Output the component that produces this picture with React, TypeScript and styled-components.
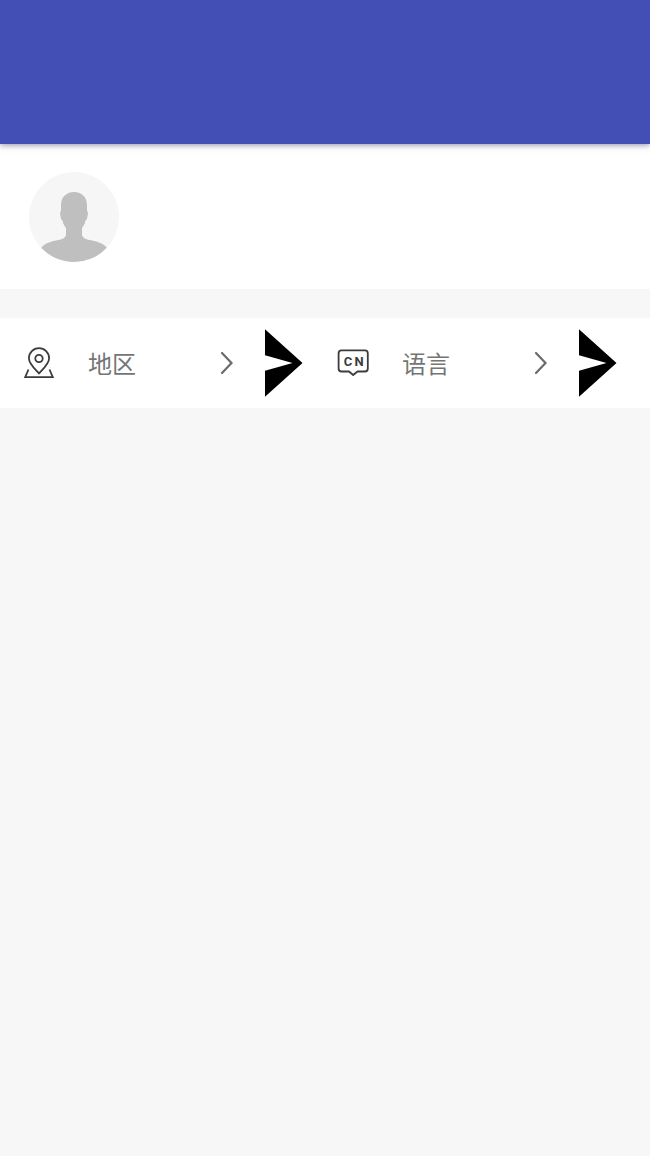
import React from "react";
import styled, { createGlobalStyle } from "styled-components";

const GlobalStyle = createGlobalStyle`
  * { box-sizing: border-box; }
  body {
    margin: 0;
    background: #f7f7f7;
    font-family: "Noto Sans CJK SC", sans-serif;
  }
`;

const Page = styled.div`
  display: flex;
  flex-direction: column;
  min-height: 100vh;
`;

const TopBar = styled.header`
  position: relative;
  height: 144px;
  background: #444fb5;
  box-shadow: 0 1px 6px rgba(30, 30, 80, 0.5);
`;

const Profile = styled.section`
  display: flex;
  align-items: center;
  height: 145px;
  padding: 0 29px;
  background: #fff;
`;

const Settings = styled.nav`
  display: flex;
  height: 90px;
  margin-top: 29px;
  padding-right: 22px;
  background: #fff;
`;

const Item = styled.button`
  display: flex;
  flex: 1;
  align-items: center;
  min-width: 0;
  padding: 0 11px 0 23px;
  border: 0;
  background: transparent;
  font: inherit;
  color: #757575;
  text-align: left;
  cursor: pointer;
`;

const Label = styled.span`
  flex: 1;
  margin-left: 33px;
  font-size: 24px;
  line-height: 36px;
`;

const ArrowSlot = styled.span`
  display: flex;
  margin-left: 31px;
`;

const Svg = styled.svg`
  display: block;
  flex: none;
`;

const Avatar = () => (
  <Svg width="90" height="90" viewBox="0 0 90 90" role="img" aria-label="头像">
    <clipPath id="avatar-circle">
      <circle cx="45" cy="45" r="45" />
    </clipPath>
    <g clipPath="url(#avatar-circle)">
      <rect width="90" height="90" fill="#f6f6f6" />
      <path
        d="M45 20C37 20 32 25.500 32 33V39C31 39 31 41 31.300 43C31.700 46 32.300 48.500 33.500 48.500C34 51.500 35.500 54 37 56V62C37 66 33 67.500 27 68.500C20 69.800 15 72 12 76V90H78V76C75 72 70 69.800 63 68.500C57 67.500 53 66 53 62V56C54.500 54 56 51.500 56.500 48.500C57.700 48.500 58.300 46 58.700 43C59 41 59 39 58 39V33C58 25.500 53 20 45 20Z"
        fill="#bfbfbf"
      />
    </g>
  </Svg>
);

const RegionIcon = () => (
  <Svg width="32" height="34" viewBox="0 0 32 34" fill="none" stroke="#3c3c3c" strokeWidth="1.800" aria-hidden="true">
    <path d="M16 27.500C12.500 23.500 5.900 18 5.900 12.300A10.100 10.100 0 0 1 26.100 12.300C26.100 18 19.500 23.500 16 27.500Z" strokeLinejoin="round" />
    <circle cx="16" cy="12.500" r="3.700" />
    <path d="M5.500 23.500L2.200 31.200H29.800L26.500 23.500" />
  </Svg>
);

const LanguageIcon = () => (
  <Svg width="32" height="34" viewBox="0 0 32 34" aria-hidden="true">
    <path
      d="M4.500 4.300H28Q30.800 4.300 30.800 7.300V22.500Q30.800 25.500 28 25.500H20.500L16.200 29L12 25.500H4.500Q1.600 25.500 1.600 22.500V7.300Q1.600 4.300 4.500 4.300Z"
      fill="none"
      stroke="#3c3c3c"
      strokeWidth="1.800"
      strokeLinejoin="round"
    />
    <g fill="#3c3c3c" fontFamily="Roboto, sans-serif" fontSize="13" fontWeight="700" textAnchor="middle">
      <text x="11" y="20">C</text>
      <text x="22" y="20">N</text>
    </g>
  </Svg>
);

const Chevron = () => (
  <Svg width="14" height="24" viewBox="0 0 14 24" fill="none" stroke="#6b6b6b" strokeWidth="2.200" aria-hidden="true">
    <path d="M2 2L11.500 12L2 22" strokeLinecap="round" />
  </Svg>
);

const Arrow = () => (
  <Svg width="38" height="68" viewBox="0 0 38 68" aria-hidden="true">
    <path d="M0 0.300L37.500 34L0 67.700V41.700L27.500 34L0 26.300Z" fill="#000" />
  </Svg>
);

const items = [
  { label: "地区", Icon: RegionIcon },
  { label: "语言", Icon: LanguageIcon },
];

export default function App() {
  return (
    <Page>
      <GlobalStyle />
      <TopBar />
      <main>
        <Profile>
          <Avatar />
        </Profile>
        <Settings>
          {items.map(({ label, Icon }) => (
            <Item key={label} type="button">
              <Icon />
              <Label>{label}</Label>
              <Chevron />
              <ArrowSlot>
                <Arrow />
              </ArrowSlot>
            </Item>
          ))}
        </Settings>
      </main>
    </Page>
  );
}
